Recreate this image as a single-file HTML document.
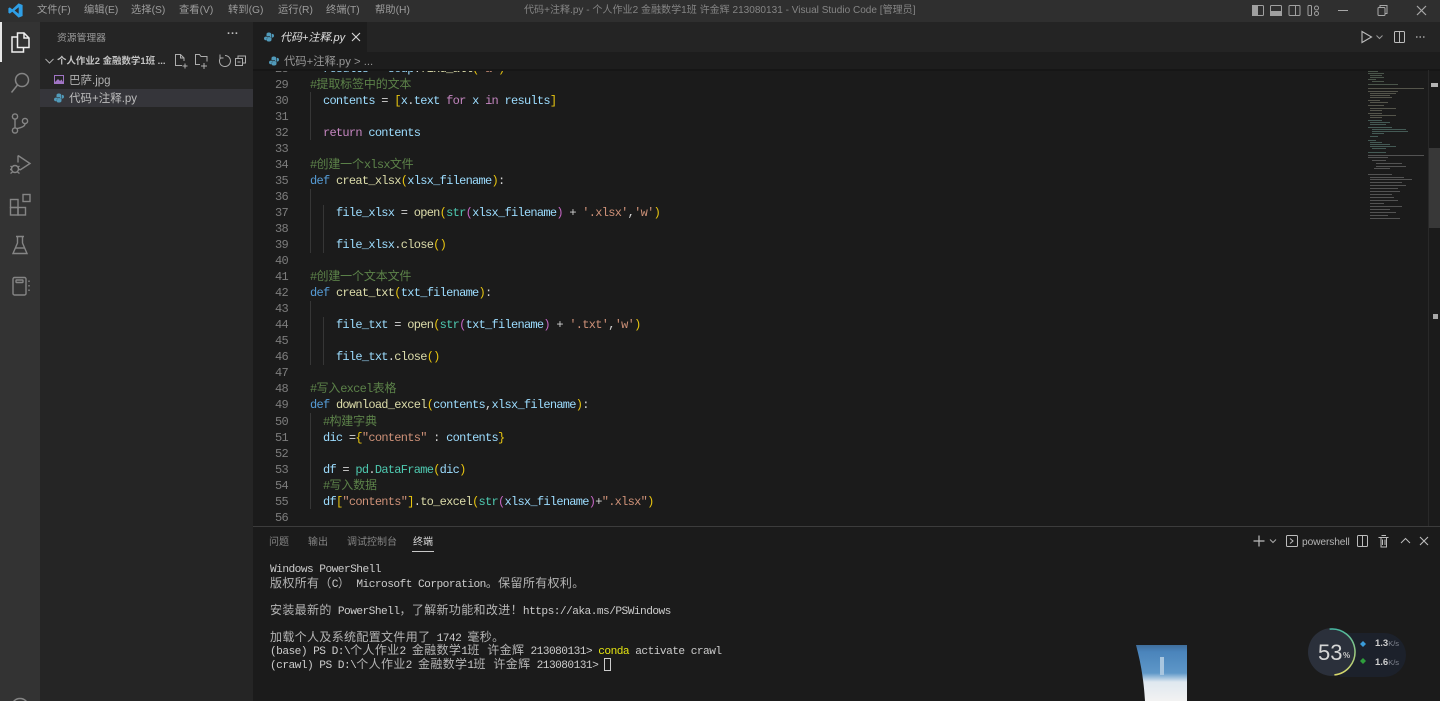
<!DOCTYPE html>
<html lang="zh">
<head>
<meta charset="utf-8">
<title>代码+注释.py - Visual Studio Code</title>
<style>
*{box-sizing:border-box}
html,body{margin:0;padding:0;width:1440px;height:701px;overflow:hidden;background:#1b1b1b}
body{position:relative;font-family:"Liberation Sans","Noto Sans CJK SC",sans-serif;color:#ccc}
#w{position:absolute;left:0;top:0;width:1440px;height:701px;overflow:hidden;filter:blur(.35px)}
.a{position:absolute;white-space:nowrap}
svg{position:absolute;overflow:visible}
.menu{top:4px;font-size:10.3px;line-height:14px;color:#9c9c9c}
.code{position:absolute;left:310px;margin:0;font:12px/16.04px "Liberation Mono","Noto Sans CJK SC",monospace;letter-spacing:-.72px;color:#d4d4d4;white-space:pre}
.code div{height:16.04px}
.ln{position:absolute;width:30px;text-align:right;font:12px/16.04px "Liberation Mono",monospace;letter-spacing:-.72px;color:#7d7d7d}
.ln div{height:16.04px}
.k{color:#569cd6}.c{color:#c586c0}.v{color:#9cdcfe}.f{color:#dcdcaa}.t{color:#4ec9b0}.s{color:#ce9178}
.y{color:#e8c510}.p{color:#c566c4}
.m{color:#5c8249}
.m b{font-weight:400;font-size:12px;letter-spacing:-.15px}
.term{position:absolute;left:270px;top:564.4px;margin:0;font:11.2px/13.5px "Liberation Mono","Noto Sans CJK SC",monospace;letter-spacing:-.55px;color:#cccccc;white-space:pre}
.term div{height:13.5px}
.term b{font-weight:400;font-size:12px;letter-spacing:.34px;color:#b4b4b4}
.ptab{top:536px;font-size:10px;line-height:13px;color:#858585}
</style>
</head>
<body>
<div id="w">
<!-- regions -->
<div class="a" style="left:0;top:0;width:1440px;height:22px;background:#2f2f2f"></div>
<div class="a" style="left:0;top:22px;width:40px;height:679px;background:#333333"></div>
<div class="a" style="left:40px;top:22px;width:213px;height:679px;background:#252525"></div>
<div class="a" style="left:253px;top:22px;width:1187px;height:30px;background:#242424"></div>
<div class="a" style="left:253px;top:22px;width:114px;height:30px;background:#1d1d1d"></div>
<div class="a" style="left:253px;top:52px;width:1187px;height:18px;background:#1d1d1d"></div>
<div class="a" style="left:40px;top:89px;width:213px;height:18px;background:#35353a"></div>
<div class="a" style="left:0;top:22px;width:2px;height:40px;background:#e8e8e8"></div>

<!-- title bar -->
<svg style="left:8px;top:3px" width="15" height="15" viewBox="0 0 15 15"><path d="M10.6.4 14.6 2v11l-4 1.6L4.3 8.7 1.8 10.6.4 9.8V5.2l1.4-.8 2.5 1.9zM10.7 4.2 6.6 7.5l4.1 3.3z" fill="#2f9fe6" fill-rule="evenodd"/></svg>
<div class="a menu" style="left:37px">文件(F)</div>
<div class="a menu" style="left:84px">编辑(E)</div>
<div class="a menu" style="left:131px">选择(S)</div>
<div class="a menu" style="left:179px">查看(V)</div>
<div class="a menu" style="left:228px">转到(G)</div>
<div class="a menu" style="left:278px">运行(R)</div>
<div class="a menu" style="left:326px">终端(T)</div>
<div class="a menu" style="left:375px">帮助(H)</div>
<div class="a" style="left:524px;top:4px;font-size:10.05px;line-height:14px;color:#858585">代码+注释.py - 个人作业2 金融数学1班 许金辉 213080131 - Visual Studio Code [管理员]</div>
<svg style="left:1250px;top:3px" width="75" height="15" fill="none" stroke="#a0a0a0">
<rect x="2.5" y="2.5" width="11" height="10" rx="1"/><rect x="2.5" y="2.5" width="5" height="10" fill="#a0a0a0"/>
<rect x="20.5" y="2.5" width="11" height="10" rx="1"/><rect x="20.5" y="8.5" width="11" height="4" fill="#a0a0a0"/>
<rect x="39" y="2.5" width="11" height="10" rx="1"/><path d="M45.500 2.500v10"/>
<rect x="58" y="2.5" width="3.5" height="10" rx="1"/><circle cx="66.5" cy="5" r="2"/><circle cx="66.5" cy="10.5" r="2"/>
</svg>
<svg style="left:1335px;top:3px" width="100" height="15" fill="none" stroke="#a8a8a8">
<path d="M3 7.500h10"/>
<rect x="43" y="4.5" width="7" height="8" rx="1"/><path d="M45 4.500V2.500h7v8h-2"/>
<path d="M82 3l9 9M91 3l-9 9" stroke-width="1.200"/>
</svg>

<!-- activity bar -->
<svg style="left:9px;top:30px" width="22" height="24" fill="none" stroke="#f0f0f0" stroke-width="1.5" viewBox="0 0 22 24"><path d="M8.500 3h6.500l5 5v9.500H8.500z"/><path d="M15 3v5h5"/><path d="M8.500 7H3v15h11.500v-4.500"/></svg>
<svg style="left:9px;top:71px" width="22" height="24" fill="none" stroke="#858585" stroke-width="1.5"><circle cx="13" cy="9" r="6.500"/><path d="M8.500 14 2.500 21.500"/></svg>
<svg style="left:9px;top:112px" width="22" height="24" fill="none" stroke="#858585" stroke-width="1.4"><circle cx="6" cy="4.500" r="2.600"/><circle cx="6" cy="18.500" r="2.600"/><circle cx="16" cy="9" r="2.600"/><path d="M6 7.100v8.800M16 11.600c0 3-4 4-8 5"/></svg>
<svg style="left:9px;top:153px" width="24" height="24" fill="none" stroke="#858585" stroke-width="1.4"><path d="M9 2.500 21 10.500 11 17M9 2.500v7"/><circle cx="6" cy="16" r="3.500"/><path d="M1.500 13l2 1.500M10.500 13l-2 1.500M1 16.500h1.500M9.500 16.500H11M1.500 20.500l2-1.500M10.500 20.500l-2-1.500"/></svg>
<svg style="left:9px;top:193px" width="24" height="24" fill="none" stroke="#858585" stroke-width="1.4"><rect x="1.500" y="6.500" width="7.500" height="8"/><rect x="1.500" y="14.500" width="7.500" height="7.500"/><rect x="9" y="14.500" width="7.500" height="7.500"/><rect x="14" y="1.500" width="7" height="7"/></svg>
<svg style="left:9px;top:234px" width="22" height="22" fill="none" stroke="#858585" stroke-width="1.400"><path d="M7 2.500h8M8.500 2.500v6.500L4 19.500h14L13.500 9V2.500"/><path d="M6.500 14h9"/></svg>
<svg style="left:9px;top:274px" width="24" height="24" fill="none" stroke="#858585" stroke-width="1.400"><rect x="4" y="3.500" width="13" height="17.500" rx="1.500"/><rect x="7" y="6" width="7" height="2.500" rx=".5"/><path d="M20 6.500v1.500M20 11v1.500M20 15.500v1.500"/></svg>
<svg style="left:9px;top:696px" width="22" height="6" fill="none" stroke="#858585" stroke-width="1.400"><circle cx="11" cy="11" r="8.500"/><circle cx="11" cy="9" r="3"/></svg>

<!-- sidebar -->
<div class="a" style="left:57px;top:32px;font-size:9.800px;line-height:13px;color:#9c9c9c">资源管理器</div>
<div class="a" style="left:227px;top:28px;font-size:11px;line-height:13px;color:#c0c0c0;letter-spacing:.3px;font-weight:700">···</div>
<svg style="left:45px;top:57px" width="9" height="8" fill="none" stroke="#aaa"><path d="M.5 2 4.500 6l4-4"/></svg>
<div class="a" style="left:57px;top:55px;font-size:9.450px;line-height:14px;font-weight:700;color:#c4c4c4">个人作业2 金融数学1班 ...</div>
<svg style="left:173px;top:53px" width="76" height="16" fill="none" stroke="#adadad">
<path d="M9 12.500H2.500v-11h5l3.500 3.500v3M7.500 1.500V5h3.500M9.500 13h5M12 10.500v5"/>
<path d="M27 11.500H22.500V1.500h4l1.500 2h6v5M28 13h6M31 10v6"/>
<path d="M52 2.500a5.500 5.500 0 1 1-4.500 2.300M47 1.500v3.500h3.500"/>
<rect x="62.500" y="5.500" width="7" height="7"/><path d="M65 5.500v-2.500h7.500v7h-3M64.500 9h3"/>
</svg>
<svg style="left:53px;top:74px" width="12" height="12" fill="none"><rect x="1.500" y="1.500" width="9" height="8" stroke="#a074c4"/><path d="M2 8l3-3 2 2 1.500-1.500L10 8v1.500H2z" fill="#a074c4"/></svg>
<div class="a" style="left:69px;top:74px;font-size:11.500px;line-height:15px;color:#b0b0b0">巴萨.jpg</div>
<svg style="left:53px;top:92px" width="12" height="12" viewBox="0 0 12 12"><path d="M6 1.500C4 1.500 3.500 2.300 3.500 3.500V5H7v.6H2.700C1.500 5.600 1 6.600 1 7.300c0 1.300.7 2 1.700 2h.9V8c0-.8.700-1.400 1.400-1.400h2.500C7.600 6.600 8.300 6 8.300 5.200V3.300C8.300 2.300 7.500 1.500 6 1.500z" fill="#519aba"/><path d="M6 10.500c2 0 2.500-.8 2.500-2V7H5v-.4h4.300c1.200 0 1.700-1 1.700-1.700 0-1.300-.7-2-1.700-2h-.4V5c0 .9-.7 2-1.400 2H5c-.8 0-1.300.6-1.300 1.400v.8c0 .8.800 1.300 2.300 1.300z" fill="#519aba"/></svg>
<div class="a" style="left:69px;top:92px;font-size:11.500px;line-height:15px;color:#bcbcbc">代码+注释.py</div>

<!-- tab -->
<svg style="left:263px;top:31px" width="12" height="12" viewBox="0 0 12 12"><path d="M6 1.500C4 1.500 3.500 2.300 3.500 3.500V5H7v.6H2.700C1.500 5.600 1 6.600 1 7.300c0 1.300.7 2 1.700 2h.9V8c0-.8.700-1.400 1.400-1.400h2.500C7.600 6.600 8.300 6 8.300 5.200V3.300C8.300 2.300 7.500 1.500 6 1.500z" fill="#519aba"/><path d="M6 10.500c2 0 2.500-.8 2.500-2V7H5v-.4h4.300c1.200 0 1.700-1 1.700-1.700 0-1.300-.7-2-1.700-2h-.4V5c0 .9-.7 2-1.400 2H5c-.8 0-1.300.6-1.300 1.400v.8c0 .8.800 1.300 2.300 1.300z" fill="#519aba"/></svg>
<div class="a" style="left:280px;top:31px;font-size:11px;line-height:15px;font-style:italic;color:#e0e0e0">代码+注释.py</div>
<svg style="left:351px;top:32px" width="10" height="10" fill="none" stroke="#d8d8d8" stroke-width="1.100"><path d="M1 1l8 8M9 1l-8 8"/></svg>
<svg style="left:1359px;top:30px" width="70" height="14" fill="none" stroke="#bcbcbc">
<path d="M3 1.500 12.500 7 3 12.500z" stroke-width="1.100"/><path d="M17.500 5.500 20.500 8.500l3-3" stroke="#999"/>
<rect x="35.500" y="1.500" width="10" height="11" rx="1"/><path d="M40.500 1.500v11"/>
<path d="M57 7h1.500M60.500 7H62M64 7h1.500" stroke-width="1.200"/>
</svg>
<!-- breadcrumb -->
<svg style="left:268px;top:55px" width="12" height="12" viewBox="0 0 12 12"><path d="M6 1.500C4 1.500 3.500 2.300 3.500 3.500V5H7v.6H2.700C1.500 5.600 1 6.600 1 7.300c0 1.300.7 2 1.700 2h.9V8c0-.8.700-1.400 1.400-1.400h2.500C7.600 6.600 8.300 6 8.300 5.200V3.300C8.300 2.300 7.500 1.500 6 1.500z" fill="#519aba"/><path d="M6 10.500c2 0 2.500-.8 2.500-2V7H5v-.4h4.300c1.200 0 1.700-1 1.700-1.700 0-1.300-.7-2-1.700-2h-.4V5c0 .9-.7 2-1.400 2H5c-.8 0-1.300.6-1.300 1.400v.8c0 .8.800 1.300 2.300 1.300z" fill="#519aba"/></svg>
<div class="a" style="left:284px;top:55px;font-size:11.300px;line-height:15px;color:#979797">代码+注释.py &gt; ...</div>

<!-- editor -->
<div class="a" style="left:253px;top:70px;width:1110px;height:457px;overflow:hidden">
<div class="ln" style="left:5px;top:-9.200px">
<div>28</div><div>29</div><div>30</div><div>31</div><div>32</div><div>33</div><div>34</div><div>35</div><div>36</div><div>37</div><div>38</div><div>39</div><div>40</div><div>41</div><div>42</div><div>43</div><div>44</div><div>45</div><div>46</div><div>47</div><div>48</div><div>49</div><div>50</div><div>51</div><div>52</div><div>53</div><div>54</div><div>55</div><div>56</div>
</div>
<div class="a" style="left:57px;top:22px;width:1px;height:48px;background:#363636"></div>
<div class="a" style="left:57px;top:119px;width:1px;height:64px;background:#363636"></div>
<div class="a" style="left:70px;top:135px;width:1px;height:48px;background:#363636"></div>
<div class="a" style="left:57px;top:231px;width:1px;height:64px;background:#363636"></div>
<div class="a" style="left:70px;top:247px;width:1px;height:48px;background:#363636"></div>
<div class="a" style="left:57px;top:343px;width:1px;height:96px;background:#363636"></div>
<pre class="code" style="left:57px;top:-9.200px"><div>  <span class="v">results</span> = <span class="v">soup</span>.<span class="f">find_all</span><span class="y">(</span><span class="s">'a'</span><span class="y">)</span></div><div><span class="m">#<b>提取标签中的文本</b></span></div><div>  <span class="v">contents</span> = <span class="y">[</span><span class="v">x</span>.<span class="v">text</span> <span class="c">for</span> <span class="v">x</span> <span class="c">in</span> <span class="v">results</span><span class="y">]</span></div><div> </div><div>  <span class="c">return</span> <span class="v">contents</span></div><div> </div><div><span class="m">#<b>创建一个</b>xlsx<b>文件</b></span></div><div><span class="k">def</span> <span class="f">creat_xlsx</span><span class="y">(</span><span class="v">xlsx_filename</span><span class="y">)</span>:</div><div> </div><div>    <span class="v">file_xlsx</span> = <span class="f">open</span><span class="y">(</span><span class="t">str</span><span class="p">(</span><span class="v">xlsx_filename</span><span class="p">)</span> + <span class="s">'.xlsx'</span>,<span class="s">'w'</span><span class="y">)</span></div><div> </div><div>    <span class="v">file_xlsx</span>.<span class="f">close</span><span class="y">()</span></div><div> </div><div><span class="m">#<b>创建一个文本文件</b></span></div><div><span class="k">def</span> <span class="f">creat_txt</span><span class="y">(</span><span class="v">txt_filename</span><span class="y">)</span>:</div><div> </div><div>    <span class="v">file_txt</span> = <span class="f">open</span><span class="y">(</span><span class="t">str</span><span class="p">(</span><span class="v">txt_filename</span><span class="p">)</span> + <span class="s">'.txt'</span>,<span class="s">'w'</span><span class="y">)</span></div><div> </div><div>    <span class="v">file_txt</span>.<span class="f">close</span><span class="y">()</span></div><div> </div><div><span class="m">#<b>写入</b>excel<b>表格</b></span></div><div><span class="k">def</span> <span class="f">download_excel</span><span class="y">(</span><span class="v">contents</span>,<span class="v">xlsx_filename</span><span class="y">)</span>:</div><div>  <span class="m">#<b>构建字典</b></span></div><div>  <span class="v">dic</span> =<span class="y">{</span><span class="s">"contents"</span> : <span class="v">contents</span><span class="y">}</span></div><div> </div><div>  <span class="v">df</span> = <span class="t">pd</span>.<span class="t">DataFrame</span><span class="y">(</span><span class="v">dic</span><span class="y">)</span></div><div>  <span class="m">#<b>写入数据</b></span></div><div>  <span class="v">df</span><span class="y">[</span><span class="s">"contents"</span><span class="y">]</span>.<span class="f">to_excel</span><span class="y">(</span><span class="t">str</span><span class="p">(</span><span class="v">xlsx_filename</span><span class="p">)</span>+<span class="s">".xlsx"</span><span class="y">)</span></div><div> </div></pre>
</div>
<div class="a" style="left:253px;top:69px;width:1187px;height:2px;background:#161616"></div>

<!-- minimap -->
<svg style="left:1366px;top:70px" width="62" height="155" opacity=".5">
<g fill="#7a8f7a">
<rect x="2" y="1" width="10" height="1"/><rect x="2" y="3" width="16" height="1"/><rect x="4" y="5" width="12" height="1"/><rect x="4" y="7" width="14" height="1"/><rect x="2" y="9" width="8" height="1"/><rect x="6" y="11" width="12" height="1"/><rect x="2" y="14" width="30" height="1"/>
</g>
<g fill="#8f8f7c">
<rect x="2" y="18" width="56" height="1"/><rect x="2" y="21" width="30" height="1"/><rect x="4" y="23" width="26" height="1"/><rect x="4" y="25" width="20" height="1"/><rect x="4" y="27" width="22" height="1"/><rect x="2" y="30" width="12" height="1"/><rect x="4" y="32" width="18" height="1"/><rect x="2" y="35" width="16" height="1"/><rect x="4" y="38" width="26" height="1"/><rect x="4" y="40" width="12" height="1"/><rect x="2" y="43" width="14" height="1"/><rect x="4" y="45" width="26" height="1"/><rect x="4" y="47" width="12" height="1"/>
</g>
<g fill="#6f9a90">
<rect x="2" y="50" width="14" height="1"/><rect x="4" y="52" width="20" height="1"/><rect x="4" y="54" width="16" height="1"/><rect x="2" y="57" width="24" height="1"/><rect x="6" y="59" width="34" height="1"/><rect x="6" y="61" width="36" height="1"/><rect x="6" y="63" width="12" height="1"/><rect x="4" y="66" width="8" height="1"/><rect x="2" y="70" width="8" height="1"/><rect x="4" y="72" width="12" height="1"/><rect x="4" y="74" width="20" height="1"/><rect x="4" y="76" width="26" height="1"/><rect x="6" y="78" width="14" height="1"/><rect x="2" y="82" width="18" height="1"/>
</g>
<g fill="#8c8c8c">
<rect x="2" y="85" width="56" height="1"/><rect x="2" y="87" width="20" height="1"/><rect x="6" y="90" width="14" height="1"/><rect x="10" y="93" width="26" height="1"/><rect x="10" y="96" width="30" height="1"/><rect x="8" y="98" width="16" height="1"/><rect x="2" y="104" width="24" height="1"/><rect x="4" y="107" width="34" height="1"/><rect x="4" y="109" width="42" height="1"/><rect x="4" y="112" width="32" height="1"/><rect x="4" y="115" width="36" height="1"/><rect x="4" y="118" width="28" height="1"/><rect x="4" y="121" width="30" height="1"/><rect x="4" y="124" width="22" height="1"/><rect x="4" y="127" width="24" height="1"/><rect x="4" y="130" width="28" height="1"/><rect x="4" y="133" width="14" height="1"/><rect x="4" y="136" width="32" height="1"/><rect x="4" y="139" width="20" height="1"/><rect x="4" y="142" width="26" height="1"/><rect x="4" y="145" width="18" height="1"/><rect x="4" y="148" width="30" height="1"/>
</g>
</svg>
<!-- scrollbar -->
<div class="a" style="left:1428px;top:70px;width:1px;height:457px;background:#292929"></div>
<div class="a" style="left:1429px;top:148px;width:11px;height:80px;background:#383838"></div>
<div class="a" style="left:1431px;top:83px;width:7px;height:4px;background:#b5b5b5"></div>
<div class="a" style="left:1433px;top:314px;width:5px;height:5px;background:#a8a8a8"></div>

<!-- panel -->
<div class="a" style="left:253px;top:526px;width:1187px;height:1px;background:#3c3c3c"></div>
<div class="a ptab" style="left:269px">问题</div>
<div class="a ptab" style="left:308px">输出</div>
<div class="a ptab" style="left:347px">调试控制台</div>
<div class="a ptab" style="left:413px;color:#d8d8d8">终端</div>
<div class="a" style="left:412px;top:551px;width:22px;height:1px;background:#c8c8c8"></div>
<svg style="left:1252px;top:533px" width="180" height="16" fill="none" stroke="#bcbcbc">
<path d="M7 2.500v11M1.500 8h11" stroke-width="1.200"/>
<path d="M18 6.500 21 9.500l3-3" stroke="#aaa"/>
<rect x="34.500" y="2.500" width="11" height="11" rx="1"/><path d="M38 5.500 41 8l-3 2.500"/>
<rect x="105.500" y="2.500" width="10" height="11" rx="1"/><path d="M110.500 2.500v11"/>
<path d="M126.500 4.500h10M129 4.500v9.500h5.500V4.500M129.500 2.500h4.500M130.500 6.500v5.500M133 6.500v5.500"/>
<path d="M149 10l4.500-4.500L158 10"/>
<path d="M168 4l8 8M176 4l-8 8" stroke-width="1.100"/>
</svg>
<div class="a" style="left:1302px;top:536px;font-size:10.200px;letter-spacing:-.1px;line-height:13px;color:#b5b5b5">powershell</div>

<pre class="term"><div>Windows PowerShell</div><div><b>版权所有（</b>C<b>）</b> Microsoft Corporation<b>。保留所有权利。</b></div><div> </div><div><b>安装最新的</b> PowerShell<b>，了解新功能和改进！</b>https://aka.ms/PSWindows</div><div> </div><div><b>加载个人及系统配置文件用了</b> 1742 <b>毫秒。</b></div><div>(base) PS D:\<b>个人作业</b>2 <b>金融数学</b>1<b>班 许金辉</b> 213080131&gt; <span style="color:#e5e510">conda</span> activate crawl</div><div>(crawl) PS D:\<b>个人作业</b>2 <b>金融数学</b>1<b>班 许金辉</b> 213080131&gt; </div></pre>
<div class="a" style="left:604px;top:658px;width:7px;height:13px;border:1px solid #cccccc"></div>

<!-- photo fragment -->
<svg style="left:1136px;top:645px" width="52" height="56">
<defs><linearGradient id="g" x1="0" y1="0" x2="0" y2="1"><stop offset="0" stop-color="#3f6e9c"/><stop offset=".12" stop-color="#4a84bb"/><stop offset=".5" stop-color="#5e97c8"/><stop offset=".66" stop-color="#dfe8f0"/><stop offset="1" stop-color="#f2f2f2"/></linearGradient></defs>
<path d="M0 0H51V56H9C8 40 6 22 0 0z" fill="url(#g)"/>
<rect x="24" y="12" width="4" height="18" fill="#a9c6df"/>
</svg>

<!-- net monitor widget -->
<div class="a" style="left:1340px;top:633px;width:66px;height:44px;border-radius:0 22px 22px 0;background:#1c212b"></div>
<svg style="left:1306px;top:626px" width="54" height="54" fill="none">
<defs><linearGradient id="r" x1="0" y1="0" x2="0" y2="1"><stop offset="0" stop-color="#45b8a0"/><stop offset="1" stop-color="#d8d86a"/></linearGradient></defs>
<circle cx="26" cy="26" r="24" fill="#2b303b"/>
<path d="M26 3a23 23 0 0 1 0 46" transform="rotate(-6 26 26)" stroke="url(#r)" stroke-width="1.500"/>
</svg>
<div class="a" style="left:1318px;top:640px;font-size:22px;line-height:25px;color:#d6d6d6">53</div>
<div class="a" style="left:1343px;top:651px;font-size:8px;line-height:10px;color:#c8c8c8;font-weight:700">%</div>
<svg style="left:1360px;top:640px" width="8" height="26"><path d="M3 1l3 3-3 3-3-3z" fill="#3a9bd8"/><path d="M3 18l3 3-3 3-3-3z" fill="#2e9e3c"/></svg>
<div class="a" style="left:1375px;top:637px;font-size:9.500px;line-height:13px;color:#cfcfcf;font-weight:700">1.3<span style="font-size:7.500px;font-weight:400;color:#808590">K/s</span></div>
<div class="a" style="left:1375px;top:656px;font-size:9.500px;line-height:13px;color:#cfcfcf;font-weight:700">1.6<span style="font-size:7.500px;font-weight:400;color:#808590">K/s</span></div>
</div>
</body>
</html>
